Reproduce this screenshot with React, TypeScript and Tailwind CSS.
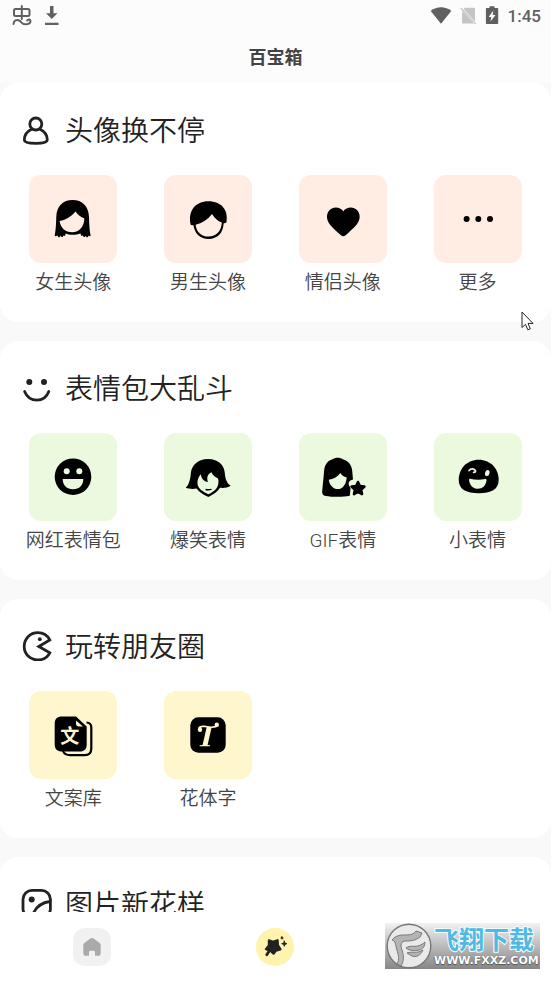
import type { ReactNode } from "react";

type Tool = { name: string; icon: ReactNode };

type Section = {
  id: string;
  title: string;
  icon: ReactNode;
  tileClassName: string;
  tools: Tool[];
};

function TileIcon({ children }: { children: ReactNode }) {
  return (
    <svg viewBox="0 0 44 44" className="size-11 overflow-visible" aria-hidden="true">
      {children}
    </svg>
  );
}

function HeadingIcon({ children }: { children: ReactNode }) {
  return (
    <svg
      viewBox="0 0 32 32"
      className="size-8 shrink-0"
      fill="none"
      stroke="#222"
      strokeWidth="2.8"
      strokeLinecap="round"
      strokeLinejoin="round"
      aria-hidden="true"
    >
      {children}
    </svg>
  );
}

const sections: Section[] = [
  {
    id: "avatars",
    title: "头像换不停",
    tileClassName: "bg-[#ffece3]",
    icon: (
      <HeadingIcon>
        <circle cx="15.8" cy="11" r="6" />
        <path d="M11.6 16.2C7.2 18.2 4.3 22.4 4.3 27c0 2.3 4.8 3.3 11.5 3.3S27.3 29.3 27.3 27c0-4.6-2.9-8.8-7.3-10.8" />
      </HeadingIcon>
    ),
    tools: [
      {
        name: "女生头像",
        icon: (
          <TileIcon>
            <path
              fillRule="evenodd"
              d="M3.7 38.8C4.8 33 5 28 5.3 20 5.6 9 12 3 21.600 3S37.6 9 38 20c.2 8 .5 13 1.7 18.8l-1.2.4-.9-.8-.8 1.9h-1.2l-.7-1.5-1 1.3-1.5-.3-.6-1.3-1.4.6-.9-2.6c-2.5 1-5 1.300-7.900 1.300s-5-.3-7-1.300l-.6 2.600-1.500-.6-.8 1.600H10.500l-.8-1.700-1.200 1.900H7.300l-.8-1.800-1.600.8zM8.600 24c5.700-.9 11.200-4 16-9.500 2.400 3.500 5.200 5.800 8.700 6.800 0 8.200-4.800 14-12 14S9.500 30.700 8.600 24z"
            />
          </TileIcon>
        ),
      },
      {
        name: "男生头像",
        icon: (
          <TileIcon>
            <path
              fillRule="evenodd"
              d="M4.800 28C1.500 14 9.500 4.300 22.400 4.300S42.800 13 40.400 25.600L37.600 26.600C37.300 36 31.500 42 22.600 42 14.200 42 8.500 36.500 7.500 28.300zM9.600 27.700C16 26.300 21.500 22.800 26 17c2.800 4.400 5.700 7 9.800 8.600-.4 8.600-5.400 14-13.200 14-7.300 0-12.300-4.800-13-11.900z"
            />
          </TileIcon>
        ),
      },
      {
        name: "情侣头像",
        icon: (
          <TileIcon>
            <path d="M22.300 14.300C26 9.200 33.500 9.600 36.800 14c3 4.100 2.300 9.800-1.500 14-3 3.500-7.500 7.400-10.700 10.300-1.500 1.300-3.100 1.300-4.600 0C16.800 35.500 12.300 31.500 9.300 28c-3.700-4.200-4.400-9.900-1.500-14 3.200-4.400 10.800-4.800 14.500.3z" />
          </TileIcon>
        ),
      },
      {
        name: "更多",
        icon: (
          <TileIcon>
            <circle cx="10.6" cy="22" r="3" />
            <circle cx="22.3" cy="22" r="3" />
            <circle cx="34" cy="22" r="3" />
          </TileIcon>
        ),
      },
    ],
  },
  {
    id: "stickers",
    title: "表情包大乱斗",
    tileClassName: "bg-[#ebf9de]",
    icon: (
      <HeadingIcon>
        <circle cx="9.3" cy="11" r="3" fill="#222" stroke="none" />
        <circle cx="24" cy="11" r="3" fill="#222" stroke="none" />
        <path d="M4.600 20.500C7 26.300 11.300 29.200 16.800 29.200s9.800-2.900 12-8.700" />
      </HeadingIcon>
    ),
    tools: [
      {
        name: "网红表情包",
        icon: (
          <TileIcon>
            <circle cx="22" cy="21.7" r="18.3" />
            <g fill="#ebf9de">
              <circle cx="15.7" cy="16.3" r="3" />
              <circle cx="28.3" cy="16.3" r="3" />
              <path d="M11.700 24H32.300c0 6.500-4 10.300-10.300 10.300S11.700 30.500 11.700 24z" />
            </g>
          </TileIcon>
        ),
      },
      {
        name: "爆笑表情",
        icon: (
          <TileIcon>
            <path
              fillRule="evenodd"
              d="M-.3 32.800C2.500 30.500 4.300 25 4.800 18.500 5.600 9.500 12.500 4 22 4s16.200 5.300 16.800 14c.4 6 2.200 10.500 5.800 12.700-2.800 1.900-6.500 2.500-10.600 2.100C31.700 37 27.200 39.500 22.400 42 17.500 39.800 13 37.300 10.600 33.500 7 34.300 2.800 34 -.3 32.800zM14.800 19.300c-2.600 2.900-3.700 6.300-3.300 9.800.7 4.800 5.300 7.700 10.900 10.100 6-2.700 9.700-6.200 10-11.200.2-1.700.1-3.200-.4-4.500-3-1.300-5.200-3.400-6.600-6.200-3.500 1.500-4.900 4.600-3.600 9.600-3.800-.3-6.300-2.800-7-7.600z"
            />
            <path d="M19.500 34.500c2 .4 4 .3 6-.1" fill="none" stroke="#000" strokeWidth="1.3" />
          </TileIcon>
        ),
      },
      {
        name: "GIF表情",
        icon: (
          <TileIcon>
            <path
              fillRule="evenodd"
              d="M3 17C3.300 10 6.500 5.700 11.500 4.300c3-2 7.500-2 10.300 0C27.500 5.700 31.300 10.500 31.400 18L32 24.500c-4.200 1-5.400 4-3.300 7l.8 2-.7 7.300c-7 1.300-17.500 1.200-24 .1-2.800-.5-3.900-2-3.600-4.700C1.800 29.500 2.500 23.500 3 17zM7.800 24.700c4.600-.4 8.300-2.600 11.500-6.600 1.700 2.600 3.700 3.900 6.400 4.300-.5 6.700-4 11.700-8.700 11.700-5 0-8.700-4.300-9.200-9.400z"
            />
            <path
              d="M37 27l1.900 4.100 4.500.5-3.300 3.100.9 4.400-4-2.200-4 2.200.9-4.400-3.300-3.100 4.500-.5z"
              stroke="#000"
              strokeWidth="2.6"
              strokeLinejoin="round"
            />
          </TileIcon>
        ),
      },
      {
        name: "小表情",
        icon: (
          <TileIcon>
            <path d="M2.700 25C2.700 13.500 11 4.700 22.700 4.700S42.700 13.500 42.700 25c0 9.500-8 13.300-20 13.300S2.700 34.500 2.700 25z" />
            <path
              d="M13 15.500c2-2.300 5.500-2 6.500.3.200 1.200-.6 1.600-1.900 1.500"
              fill="none"
              stroke="#ebf9de"
              strokeWidth="1.7"
              strokeLinecap="round"
            />
            <ellipse cx="31.3" cy="18" rx="2.2" ry="3.1" transform="rotate(15 31.3 18)" fill="#ebf9de" />
            <path d="M14 23.800c5 1.200 10 1.300 15.300.3 1 0 1.400.6 1.200 1.600-.9 5-3.900 8-8.600 8-4.600 0-7.900-3-8.800-8.300-.2-1 .1-1.600.9-1.600z" fill="#ebf9de" />
          </TileIcon>
        ),
      },
    ],
  },
  {
    id: "moments",
    title: "玩转朋友圈",
    tileClassName: "bg-[#fff6cd]",
    icon: (
      <HeadingIcon>
        <path d="M29.800 11C27.500 6.500 23 3.700 17.900 3.700 10 3.700 4.200 9.900 4.200 17.500S10 31 17.900 31c5.100 0 9.600-2.700 11.900-7.200l-11-6.300z" strokeLinejoin="miter" />
        <circle cx="19.8" cy="10.2" r="1.9" fill="#222" stroke="none" />
      </HeadingIcon>
    ),
    tools: [
      {
        name: "文案库",
        icon: (
          <TileIcon>
            <path
              d="M35.500 9.500c3 .2 4.800 2 4.800 5V35.500c0 4.300-2.300 6.600-6.600 6.600H19c-3.500 0-5.800-1.300-7-4"
              fill="none"
              stroke="#000"
              strokeWidth="2.2"
            />
            <path d="M11 3.500H25l10.700 10V31.500c0 4.600-2.400 7-7 7H11c-4.800 0-7.300-2.400-7.300-7v-21c0-4.600 2.500-7 7.300-7z" />
            <path d="M25 7.500v3c0 2 1 3 3 3h4z" fill="#fff6cd" />
            <text
              x="18.7"
              y="30"
              textAnchor="middle"
              fill="#fff6cd"
              className="font-['Noto_Sans_CJK_SC',sans-serif] text-[19px] font-bold"
            >
              文
            </text>
          </TileIcon>
        ),
      },
      {
        name: "花体字",
        icon: (
          <TileIcon>
            <rect x="4.3" y="4.3" width="35.4" height="35.4" rx="8" />
            <g fill="#fff6cd">
              <circle cx="14" cy="16.7" r="2.2" />
              <circle cx="30.8" cy="11.7" r="2.2" />
              <path d="M12 15.500c.6-2.900 3.600-3.400 8-2.700 4.500.9 8.500 1 10.300-1.300l2 1.300c-1.800 2.500-6 2.500-11.300 1.700-4.300-.7-6.300-.5-7 1.700z" />
              <path d="M20.800 13.500l4.900.5-4.100 17.900 2.500.3-.3 1.100H13.500l.3-1.100 2.800-.3z" />
            </g>
          </TileIcon>
        ),
      },
    ],
  },
  {
    id: "pictures",
    title: "图片新花样",
    tileClassName: "bg-[#e4f3ff]",
    icon: (
      <HeadingIcon>
        <rect x="3" y="3.3" width="27.4" height="27.4" rx="9" />
        <circle cx="11.7" cy="12.5" r="3" fill="#222" stroke="none" />
        <path d="M13 27c3-7 9-11.500 17-12.500" />
      </HeadingIcon>
    ),
    tools: [],
  },
];

function StatusBar() {
  return (
    <div className="flex h-[31px] items-center justify-between pr-[10px] pl-3 text-[#606060]">
      <div className="flex items-center gap-3">
        <svg viewBox="0 0 20 22" className="h-[22px] w-5" fill="none" stroke="currentColor" strokeWidth="2" strokeLinecap="round" aria-hidden="true">
          <rect x="2" y="4" width="15.5" height="7" rx="1.5" />
          <path d="M9.800 1v13" />
          <path d="M1.500 19c.3-3.500 3.200-4.800 5.700-3.500 2.500 1.200 2.500 3.800 6 3.800 3 0 5.300-1 5.300-3.300 0-1.800-2.500-2-3.300-.5" />
        </svg>
        <svg viewBox="0 0 16 20" className="h-5 w-4" fill="currentColor" aria-hidden="true">
          <path d="M6 0h3.500v7.300h4L7.800 13 2 7.300h4zM1 16.700h13.500V19H1z" />
        </svg>
      </div>
      <div className="flex items-center gap-2">
        <svg viewBox="0 0 22 18" className="h-[18px] w-[22px]" fill="currentColor" aria-hidden="true">
          <path d="M.7 4C6.500-1 15.500-1 21.300 4L11 16.800z" />
        </svg>
        <svg viewBox="0 0 16 18" className="h-[18px] w-4" fill="#c4c4c4" aria-hidden="true">
          <path d="M5 .7h8.500c1 0 1.500.5 1.500 1.500v12.200L3.600 2.200zM2.200 3.700L14 16.500H3.500c-1 0-1.500-.5-1.500-1.500z" />
          <path d="M.7 1l15 16" stroke="#c4c4c4" strokeWidth="1.2" />
        </svg>
        <svg viewBox="0 0 16 20" className="h-5 w-4" aria-hidden="true">
          <path d="M5.500.3h5V2h2.700c.6 0 1 .4 1 1v14c0 .6-.4 1-1 1H2.900c-.6 0-1-.4-1-1V3c0-.6.4-1 1-1h2.600z" fill="currentColor" />
          <path d="M9.300 4.500L4.700 11h2.600l-.8 4.500L11.500 9H8.700z" fill="#fcfcfc" />
        </svg>
        <span className="font-[Roboto,sans-serif] text-[17px] leading-5 font-medium">1:45</span>
      </div>
    </div>
  );
}

function ToolSection({ id, title, icon, tileClassName, tools }: Section) {
  return (
    <section aria-labelledby={id} className="min-h-[239px] shrink-0 rounded-[18px] bg-white px-[6px] pt-[26px] pb-6">
      <h2
        id={id}
        className="flex h-10 items-center gap-[13px] pl-[14px] font-['Noto_Sans_CJK_SC',sans-serif] text-[28px] leading-[38px] font-[350] text-[#222]"
      >
        {icon}
        {title}
      </h2>
      <ul className="mt-[26px] grid grid-cols-4">
        {tools.map((tool) => (
          <li key={tool.name}>
            <button type="button" className="flex w-full flex-col items-center gap-[6px]">
              <span className={`flex size-[88px] items-center justify-center rounded-xl ${tileClassName}`}>
                {tool.icon}
              </span>
              <span className="text-[19px] leading-7 font-[350] whitespace-nowrap text-[#444]">{tool.name}</span>
            </button>
          </li>
        ))}
      </ul>
    </section>
  );
}

function BottomNav() {
  return (
    <nav className="grid h-[69px] shrink-0 grid-cols-3 place-items-center bg-white">
      <button type="button" aria-label="首页" className="flex size-[38px] items-center justify-center rounded-xl bg-[#f1f1f1]">
        <svg viewBox="0 0 20 20" className="size-5" fill="#aaa" aria-hidden="true">
          <path d="M8.300 1.500c1.100-.8 2.300-.8 3.400 0l5.600 4.200c1 .7 1.400 1.600 1.400 2.700v7.800c0 1.700-.9 2.600-2.600 2.600H13v-3.600c0-1-.5-1.500-1.500-1.500h-3c-1 0-1.500.5-1.500 1.500v3.600H3.900c-1.700 0-2.600-.9-2.600-2.600V8.400c0-1.100.4-2 1.400-2.700z" />
        </svg>
      </button>
      <button type="button" aria-label="百宝箱" aria-current="page" className="flex size-[38px] items-center justify-center rounded-full bg-[#fff3ae]">
        <svg viewBox="0 0 26 26" className="size-[26px]" fill="#222" stroke="#222" strokeLinejoin="round" strokeLinecap="round" aria-hidden="true">
          <path d="M7 6.500l4 1.300 4.500-1.500.4 5 2.500 4-4.500 1.200-2.300 3-3.200-3-4.400-1.300 3-3.700z" strokeWidth="2.4" />
          <path d="M7.500 16.500l-2.700 4.200" strokeWidth="2.8" />
          <path d="M22.300 7l.7 2 2 .7-2 .7-.7 2-.7-2-2-.7 2-.7zM20 2.700l.4.900.9.400-.9.400-.4.900-.4-.9-.9-.4.900-.4z" strokeWidth=".8" />
        </svg>
      </button>
      <button type="button" aria-label="我的" className="size-[38px] rounded-xl bg-[#f1f1f1]" />
    </nav>
  );
}

function SiteBadge() {
  return (
    <div className="absolute right-[11px] bottom-3 flex h-[46px] w-[155px] items-center gap-[2px] bg-linear-to-b from-[#f2f2f2] to-[#878787] pl-[1px]">
      <svg viewBox="0 0 46 46" className="size-[46px] shrink-0" aria-hidden="true">
        <circle cx="23" cy="23" r="21.8" fill="#e9e9e9" stroke="#777" strokeWidth="1.4" />
        <g fill="#b4b4b4" stroke="#777" strokeWidth="1" strokeLinejoin="round">
          <path d="M6 17c4-5 9-5 13-5 6 0 9-1 11-4l6 2-2 4c-5 4-10 4-14 4-5 0-6 4-4 9 2 6 2 11-1 16l-4-2c3-5 1-10 0-14-2-6-1-9-5-10z" />
          <path d="M20 25c4-3 8-1 12-2 3-1 5-2 7-4 0 4-2 7-6 8-5 1-9 1-13-2z" />
          <path d="M21 30c5-2 10 1 16-3-2 5-7 8-11 6z" />
        </g>
      </svg>
      <div className="flex flex-col gap-1 whitespace-nowrap">
        <span className="font-['Noto_Sans_CJK_SC',sans-serif] text-[25px] leading-[26px] font-bold text-[#4fb9e2] [paint-order:stroke_fill] [-webkit-text-stroke:2px_#f4fbff]">
          飞翔下载
        </span>
        <span className="font-['DejaVu_Sans',sans-serif] text-[11px] leading-3 font-bold text-white [text-shadow:0_0_1px_#555,0_1px_1px_#555]">
          WWW.FXXZ.COM
        </span>
      </div>
    </div>
  );
}

export default function App() {
  return (
    <div className="relative flex h-screen flex-col overflow-hidden bg-[#f9f9f9] font-[Roboto,'Noto_Sans_CJK_SC',sans-serif]">
      <header className="h-[83px] shrink-0 bg-[#fcfcfc]">
        <StatusBar />
        <h1 className="text-center font-['Noto_Sans_CJK_SC',sans-serif] text-[18px] leading-[50px] font-bold text-[#444]">
          百宝箱
        </h1>
      </header>
      <main className="flex min-h-0 flex-1 flex-col gap-[19px] overflow-hidden">
        {sections.map((section) => (
          <ToolSection key={section.id} {...section} />
        ))}
      </main>
      <BottomNav />
      <SiteBadge />
      <svg viewBox="0 0 14 20" className="pointer-events-none absolute top-[311px] right-[16px] h-5 w-[14px]" aria-hidden="true">
        <path d="M1 1v15.500l3.500-3.200 2.300 5.500 2.500-1-2.300-5.400H12z" fill="#fff" stroke="#223" strokeWidth="1" />
      </svg>
    </div>
  );
}
